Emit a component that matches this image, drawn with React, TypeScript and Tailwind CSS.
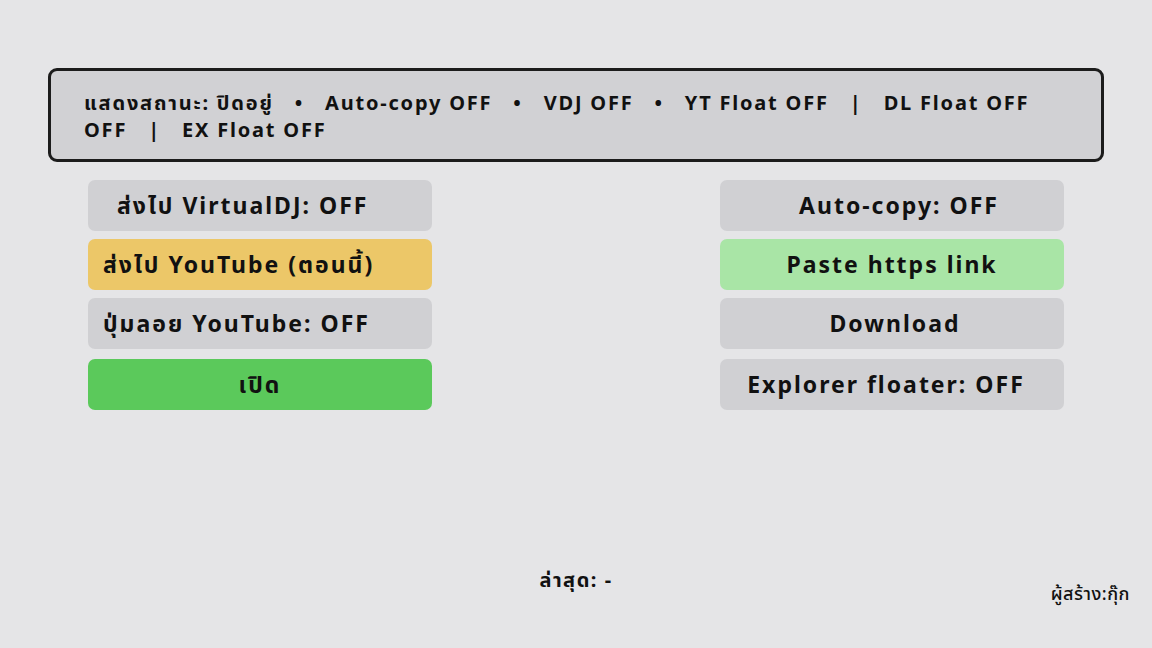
const font = { fontFamily: '"Noto Sans", "Noto Sans Thai", "Open Sans", sans-serif' }

function Btn({ label, tone, align = "center", pad = "" }: { label: string; tone: string; align?: "center" | "left"; pad?: string }) {
  return (
    <button
      className={`flex h-[51px] w-[344px] items-center rounded-[7px] text-[23px] font-bold tracking-[2px] text-[#111] whitespace-nowrap ${tone} ${
        align === "center" ? "justify-center" : "justify-start"
      } ${pad}`}
    >
      {label}
    </button>
  )
}

const Sep = ({ c }: { c: string }) => <span className="px-[21px]">{c}</span>

export default function App() {
  return (
    <div className="flex h-[648px] w-[1152px] flex-col bg-[#e5e5e7] px-[48px] pt-[68px]" style={font}>
      <div className="h-[94px] rounded-[9px] border-[3px] border-[#1c1c1c] bg-[#d1d1d4] px-[33px] pt-[18px] text-[20px] font-bold leading-[27px] tracking-[1.8px] text-[#111] whitespace-nowrap">
        <div className="flex">
          <span>แสดงสถานะ: ปิดอยู่</span>
          <Sep c="•" />
          <span>Auto-copy OFF</span>
          <Sep c="•" />
          <span>VDJ OFF</span>
          <Sep c="•" />
          <span>YT Float OFF</span>
          <Sep c="|" />
          <span>DL Float OFF</span>
        </div>
        <div className="flex">
          <span>OFF</span>
          <Sep c="|" />
          <span>EX Float OFF</span>
        </div>
      </div>

      <div className="mt-[18px] flex justify-between px-[40px]">
        <div className="flex flex-col gap-[8px]">
          <Btn label="ส่งไป VirtualDJ: OFF" tone="bg-[#d0d0d3]" align="left" pad="pl-[29px]" />
          <Btn label="ส่งไป YouTube (ตอนนี้)" tone="bg-[#ecc768]" align="left" pad="pl-[15px]" />
          <Btn label="ปุ่มลอย YouTube: OFF" tone="bg-[#d0d0d3]" align="left" pad="pl-[15px]" />
          <div className="mt-[2px]">
            <Btn label="เปิด" tone="bg-[#5bc95b]" />
          </div>
        </div>
        <div className="flex flex-col gap-[8px]">
          <Btn label="Auto-copy: OFF" tone="bg-[#d0d0d3]" pad="pl-[14px]" />
          <Btn label="Paste https link" tone="bg-[#a9e5a6]" />
          <Btn label="Download" tone="bg-[#d0d0d3]" pad="pl-[6px]" />
          <div className="mt-[2px]">
            <Btn label="Explorer floater: OFF" tone="bg-[#d0d0d3]" pad="pr-[12px]" />
          </div>
        </div>
      </div>

      <div className="mt-[155px] grid grid-cols-3 text-[#111]">
        <div />
        <div className="text-center text-[20px] font-bold tracking-[1.5px]">ล่าสุด: -</div>
        <div className="mr-[-26px] mt-[15px] text-right text-[18px] font-medium tracking-[0.5px]">ผู้สร้าง:กุ๊ก</div>
      </div>
    </div>
  )
}
